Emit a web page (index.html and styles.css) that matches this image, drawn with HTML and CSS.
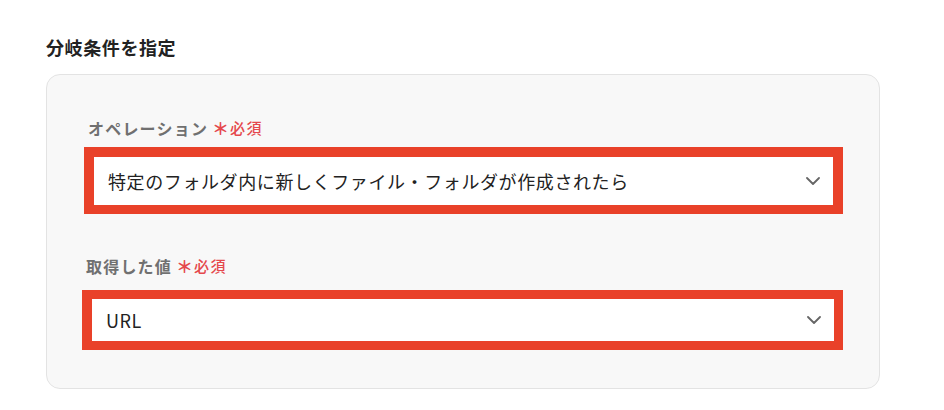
FILE: index.html
```html
<!DOCTYPE html>
<html lang="ja">
<head>
<meta charset="utf-8">
<link rel="stylesheet" href="styles.css">
</head>
<body>
<main class="page">
  <h2 class="section-title">分岐条件を指定</h2>
  <section class="panel">
    <div class="field">
      <div class="field-label">オペレーション<span class="req"><span class="req-mark">＊</span>必須</span></div>
      <div class="select select-tall">
        <span class="select-value">特定のフォルダ内に新しくファイル・フォルダが作成されたら</span>
        <svg class="chevron" width="14" height="8" viewBox="0 0 14 8"><path d="M1 1 L7 7 L13 1" fill="none" stroke="#666" stroke-width="1.8" stroke-linecap="round" stroke-linejoin="round"/></svg>
      </div>
    </div>
    <div class="field field-second">
      <div class="field-label">取得した値<span class="req"><span class="req-mark">＊</span>必須</span></div>
      <div class="select select-short">
        <span class="select-value">URL</span>
        <svg class="chevron" width="14" height="8" viewBox="0 0 14 8"><path d="M1 1 L7 7 L13 1" fill="none" stroke="#666" stroke-width="1.8" stroke-linecap="round" stroke-linejoin="round"/></svg>
      </div>
    </div>
  </section>
</main>
</body>
</html>
```

FILE: styles.css
```css
* { box-sizing: border-box; }
html, body { margin: 0; padding: 0; background: #ffffff; }
body {
  font-family: "Noto Sans CJK JP", "Noto Sans", sans-serif;
  color: #222222;
}
.page {
  padding: 34px 0 0 46px;
  width: 880px;
}
.section-title {
  margin: 0 0 14px 0;
  font-size: 18px;
  line-height: 26px;
  font-weight: 600;
  letter-spacing: 0.6px;
  color: #222222;
}
.panel {
  width: 834px;
  height: 315px;
  background: #f8f8f8;
  border: 1px solid #e3e3e3;
  border-radius: 14px;
  padding: 41px 36px 0 37px;
}
.field-label {
  margin-left: 4px;
  font-size: 16px;
  line-height: 24px;
  font-weight: 600;
  letter-spacing: 1.2px;
  color: #707070;
  display: flex;
  align-items: center;
}
.req {
  margin-left: 4px;
  font-size: 15px;
  color: #e5484d;
  letter-spacing: 1.5px;
  font-weight: 500;
  display: inline-flex;
  align-items: center;
}
.req-mark {
  font-size: 17px;
  font-weight: 700;
  margin-right: 1px;
  letter-spacing: 0;
}
.select {
  display: flex;
  align-items: center;
  justify-content: space-between;
  background: #ffffff;
  border: 10px solid #e94129;
  padding: 0 13px 0 14px;
}
.select-tall {
  margin-top: 7px;
  height: 67px;
  border-bottom-width: 9px;
}
.field-second { margin-top: 40px; }
.field-second .field-label { margin-left: 2px; }
.select-short {
  margin-top: 12px;
  margin-left: -2px;
  height: 60px;
  border-width: 9px 9px 9px 10px;
}
.select-value {
  font-size: 18px;
  line-height: 26px;
  letter-spacing: 0.6px;
  color: #222222;
}
.chevron { display: block; }
```
